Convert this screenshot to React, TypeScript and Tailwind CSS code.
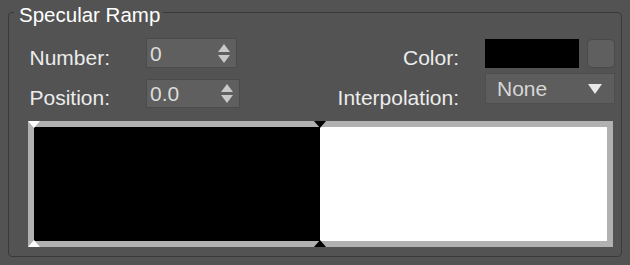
import React from "react";

const font = { fontFamily: '"Liberation Sans", Arial, sans-serif' };

function Spinner({ value, className }: { value: string; className: string }) {
    return (
        <div
            className={`flex items-center justify-between border border-[#4b4b4b] bg-[#5f5f5f] pl-[3px] pr-[6px] text-[21px] text-[#dcdcdc] ${className}`}
        >
            <span className="leading-none">{value}</span>
            <div className="flex flex-col items-center gap-[3px]">
                <div className="h-0 w-0 border-x-[6px] border-b-[8px] border-x-transparent border-b-[#c9c9c9]" />
                <div className="h-0 w-0 border-x-[6px] border-t-[8px] border-x-transparent border-t-[#c9c9c9]" />
            </div>
        </div>
    );
}

export default function App() {
    return (
        <div className="h-[265px] w-[630px] overflow-hidden bg-[#535353] pt-[2px]" style={font}>
            <fieldset className="mx-[8px] h-[255px] w-[614px] rounded-[4px] border border-[#393939] p-0">
                <legend className="ml-[5px] pl-[5px] pr-[3px] pt-[6px] text-[20.5px] leading-[14px] text-white">
                    Specular Ramp
                </legend>

                {/* row 1 */}
                <div className="mt-[16px] flex h-[30px] items-start">
                    <div className="mt-[8px] w-[101px] text-right text-[21px] leading-[24px] text-[#ececec]">
                        Number:
                    </div>
                    <Spinner value="0" className="ml-[36px] h-[30px] w-[91px]" />
                    <div className="mt-[8px] w-[222px] text-right text-[21px] leading-[24px] text-[#ececec]">
                        Color:
                    </div>
                    <div className="ml-[26px] mt-[1px] h-[29px] w-[94px] bg-black" />
                    <div className="ml-[8px] mt-[1px] h-[29px] w-[28px] rounded-[5px] border border-[#4a4a4a] bg-[#5f5f5f]" />
                </div>

                {/* row 2 */}
                <div className="mt-[5px] flex h-[35px] items-start">
                    <div className="mt-[13px] w-[101px] text-right text-[21px] leading-[24px] text-[#ececec]">
                        Position:
                    </div>
                    <Spinner value="0.0" className="ml-[36px] mt-[6px] h-[29px] w-[94px]" />
                    <div className="mt-[13px] w-[219px] text-right text-[21px] leading-[24px] text-[#ececec]">
                        Interpolation:
                    </div>
                    <div className="ml-[26px] flex h-[31px] w-[130px] items-center justify-between border border-[#4e4e4e] bg-[#5d5d5d] pl-[11px] pr-[12px] text-[21px] text-[#d6d6d6]">
                        <span className="leading-none">None</span>
                        <div className="h-0 w-0 border-x-[7px] border-t-[10px] border-x-transparent border-t-[#e8e8e8]" />
                    </div>
                </div>

                {/* ramp */}
                <div className="relative ml-[19px] mt-[13px] flex h-[126px] w-[585px] border-[6px] border-[#b1b1b1]">
                    <div className="w-[286px] bg-black" />
                    <div className="flex-1 bg-white" />
                    <div className="absolute left-[-6px] top-[-6px] h-0 w-0 border-x-[6px] border-t-[7px] border-x-transparent border-t-white" />
                    <div className="absolute bottom-[-6px] left-[-6px] h-0 w-0 border-x-[6px] border-b-[7px] border-x-transparent border-b-white" />
                    <div className="absolute left-[280px] top-[-6px] h-0 w-0 border-x-[6px] border-t-[7px] border-x-transparent border-t-black" />
                    <div className="absolute bottom-[-6px] left-[280px] h-0 w-0 border-x-[6px] border-b-[7px] border-x-transparent border-b-black" />
                </div>
            </fieldset>
        </div>
    );
}
